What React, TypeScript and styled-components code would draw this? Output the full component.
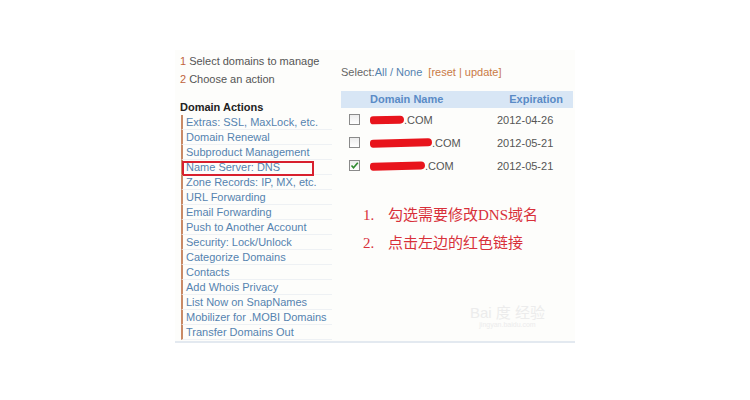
import React from 'react';
import styled, { createGlobalStyle } from 'styled-components';

const GlobalStyle = createGlobalStyle`
  html, body {
    margin: 0;
    padding: 0;
    background: #fff;
  }
  body {
    font-family: "Liberation Sans", Arial, sans-serif;
    font-size: 11px;
  }
`;

const Page = styled.div`
  width: 750px;
  height: 400px;
  padding-top: 50px;
  box-sizing: border-box;
  display: flex;
  justify-content: center;
`;

const Frame = styled.div`
  position: relative;
  width: 400px;
  height: 293px;
  display: flex;
  background: #fdfdfb;
  border-bottom: 2px solid #e3e9f0;
  box-sizing: border-box;
`;

const Sidebar = styled.div`
  width: 160px;
  padding: 2px 0 0 5px;
  box-sizing: border-box;
`;

const Step = styled.div`
  line-height: 18px;
  color: #555;
`;

const StepNum = styled.span`
  color: #c0643c;
  margin-right: 3px;
`;

const ActionsTitle = styled.div`
  margin-top: 11px;
  line-height: 16px;
  font-weight: bold;
  color: #222;
`;

const ActionList = styled.div`
  display: flex;
  flex-direction: column;
  margin-left: 1px;
`;

const ActionItem = styled.div<{ highlighted?: boolean }>`
  position: relative;
  width: 151px;
  height: 15px;
  line-height: 15px;
  padding-left: 3px;
  border-left: 2px solid #c98a66;
  border-bottom: 1px solid #eef1f4;
  box-sizing: border-box;
  color: #5583b0;
  white-space: nowrap;

  ${({ highlighted }) =>
    highlighted &&
    `
    &::after {
      content: '';
      position: absolute;
      left: -1px;
      top: 1px;
      width: 132px;
      height: 15px;
      border: 2px solid #d8202e;
      box-sizing: border-box;
    }
  `}
`;

const Main = styled.div`
  flex: 1;
  padding: 14px 2px 0 6px;
  box-sizing: border-box;
`;

const SelectBar = styled.div`
  line-height: 16px;
  color: #666;
  margin-bottom: 11px;
`;

const BlueLink = styled.span`
  color: #5583b0;
`;

const OrangeLink = styled.span`
  color: #c97a45;
  margin-left: 6px;
`;

const Table = styled.div`
  width: 232px;
`;

const HeaderRow = styled.div`
  display: flex;
  height: 17px;
  line-height: 17px;
  background: #d8e6f5;
  font-weight: bold;
  color: #5a8bc6;
`;

const Row = styled.div`
  display: flex;
  height: 23px;
  align-items: center;
  color: #555;
`;

const CheckCell = styled.div`
  width: 29px;
  padding-left: 8px;
  box-sizing: border-box;
  display: flex;
  align-items: center;
`;

const NameCell = styled.div`
  width: 127px;
  display: flex;
  align-items: center;
`;

const DateCell = styled.div<{ header?: boolean }>`
  flex: 1;
  text-align: ${({ header }) => (header ? 'right' : 'left')};
  padding-right: ${({ header }) => (header ? '10px' : '0')};
`;

const Box = styled.span`
  width: 11px;
  height: 11px;
  border: 1px solid #8a8a8a;
  background: linear-gradient(#ececec, #fff);
  box-sizing: border-box;
  display: flex;
  align-items: center;
  justify-content: center;
`;

const Redaction = styled.span<{ w: number }>`
  display: inline-block;
  width: ${({ w }) => w}px;
  height: 8px;
  border-radius: 4px 5px 5px 4px;
  background: #e8141c;
  transform: rotate(-1.5deg);
`;

const Notes = styled.div`
  margin-top: 24px;
  padding-left: 22px;
  font-family: "Liberation Serif", "Noto Sans CJK SC", serif;
  font-size: 15px;
  line-height: 28px;
  color: #d8303a;
`;

const NoteNum = styled.span`
  display: inline-block;
  width: 25px;
`;

const Watermark = styled.div`
  position: absolute;
  right: 30px;
  bottom: 12px;
  text-align: center;
  color: #ececec;
  font-family: "Liberation Sans", "Noto Sans CJK SC", sans-serif;
`;

const WatermarkLogo = styled.div`
  font-size: 15px;
  line-height: 16px;
`;

const WatermarkUrl = styled.div`
  font-size: 7px;
  line-height: 8px;
`;

const Checkbox = ({ checked }: { checked?: boolean }) => (
  <Box>
    {checked && (
      <svg width="9" height="9" viewBox="0 0 9 9">
        <path d="M1.5 4.5 L3.5 6.8 L7.8 1.8" fill="none" stroke="#2f8a2f" strokeWidth="1.6" />
      </svg>
    )}
  </Box>
);

const actions = [
  'Extras: SSL, MaxLock, etc.',
  'Domain Renewal',
  'Subproduct Management',
  'Name Server: DNS',
  'Zone Records: IP, MX, etc.',
  'URL Forwarding',
  'Email Forwarding',
  'Push to Another Account',
  'Security: Lock/Unlock',
  'Categorize Domains',
  'Contacts',
  'Add Whois Privacy',
  'List Now on SnapNames',
  'Mobilizer for .MOBI Domains',
  'Transfer Domains Out',
];

const domains = [
  { redact: 34, date: '2012-04-26', checked: false },
  { redact: 62, date: '2012-05-21', checked: false },
  { redact: 55, date: '2012-05-21', checked: true },
];

export default function App() {
  return (
    <>
      <GlobalStyle />
      <Page>
        <Frame>
          <Sidebar>
            <Step>
              <StepNum>1</StepNum>Select domains to manage
            </Step>
            <Step>
              <StepNum>2</StepNum>Choose an action
            </Step>
            <ActionsTitle>Domain Actions</ActionsTitle>
            <ActionList>
              {actions.map((a) => (
                <ActionItem key={a} highlighted={a === 'Name Server: DNS'}>
                  {a}
                </ActionItem>
              ))}
            </ActionList>
          </Sidebar>
          <Main>
            <SelectBar>
              Select:<BlueLink>All / None</BlueLink>
              <OrangeLink>[reset | update]</OrangeLink>
            </SelectBar>
            <Table>
              <HeaderRow>
                <CheckCell />
                <NameCell>Domain Name</NameCell>
                <DateCell header>Expiration</DateCell>
              </HeaderRow>
              {domains.map((d, i) => (
                <Row key={i}>
                  <CheckCell>
                    <Checkbox checked={d.checked} />
                  </CheckCell>
                  <NameCell>
                    <Redaction w={d.redact} />
                    .COM
                  </NameCell>
                  <DateCell>{d.date}</DateCell>
                </Row>
              ))}
            </Table>
            <Notes>
              <div>
                <NoteNum>1.</NoteNum>勾选需要修改DNS域名
              </div>
              <div>
                <NoteNum>2.</NoteNum>点击左边的红色链接
              </div>
            </Notes>
          </Main>
          <Watermark>
            <WatermarkLogo>Bai 度 经验</WatermarkLogo>
            <WatermarkUrl>jingyan.baidu.com</WatermarkUrl>
          </Watermark>
        </Frame>
      </Page>
    </>
  );
}
